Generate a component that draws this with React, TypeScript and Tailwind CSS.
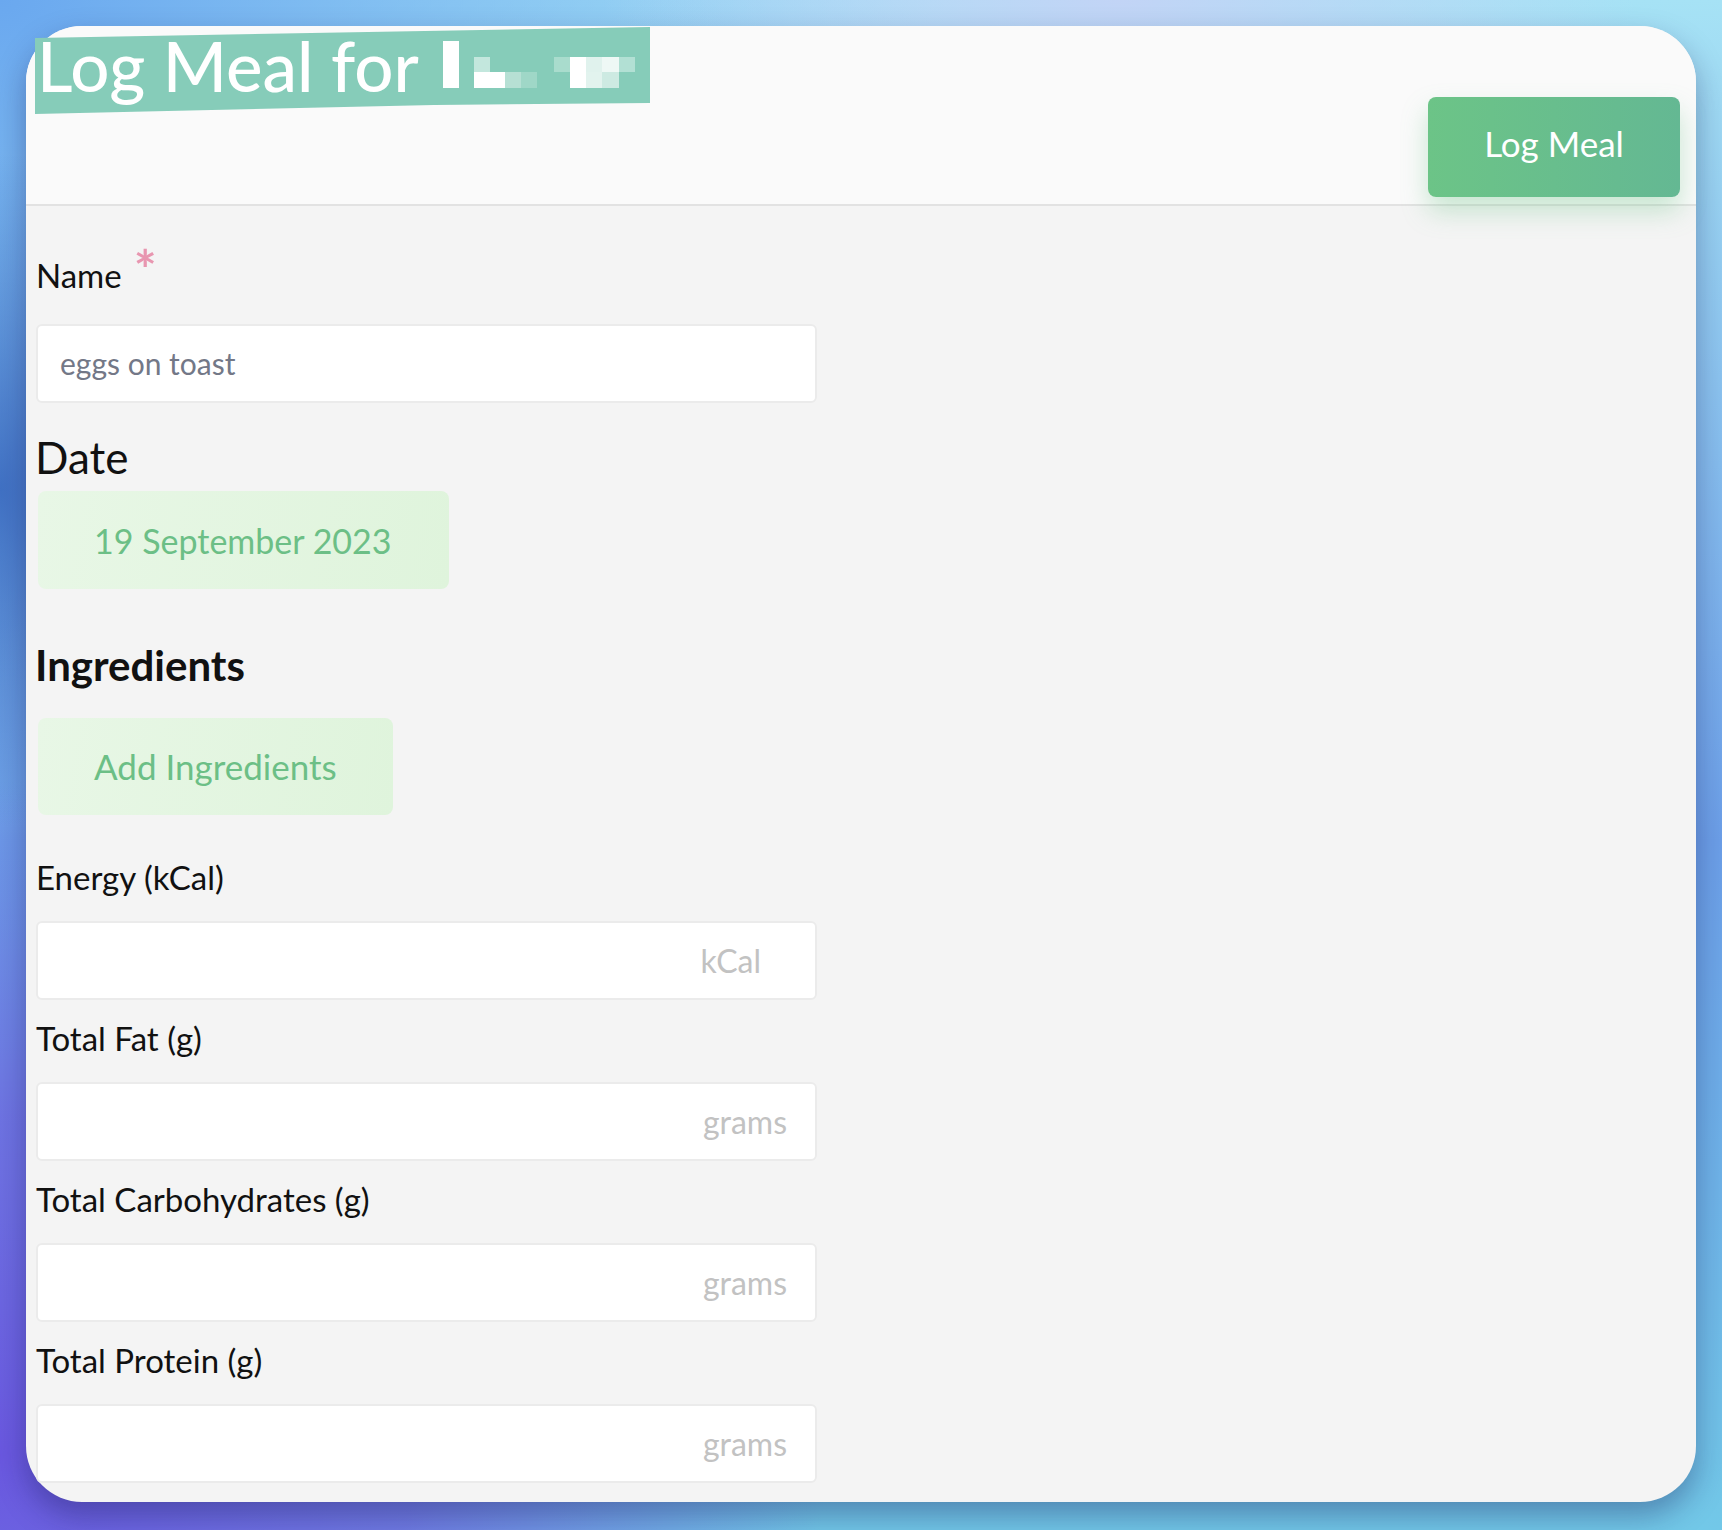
import React from "react";

function Redaction() {
  const rects: [number, number, number, number, string][] = [
    [0, 0, 16, 47, "#ffffff"],
    [31, 16, 16, 15, "#c3e7dd"],
    [31, 31, 31, 16, "#ffffff"],
    [62, 31, 16, 16, "#b6e0d4"],
    [78, 31, 16, 16, "#9fd7c7"],
    [111, 16, 16, 15, "#a9dccd"],
    [127, 16, 16, 31, "#ffffff"],
    [143, 16, 16, 15, "#e0f2ed"],
    [159, 16, 17, 15, "#eef8f5"],
    [176, 16, 16, 15, "#b2e0d4"],
    [143, 31, 16, 16, "#e2f3ee"],
    [159, 31, 17, 16, "#cdeae2"],
  ];
  return (
    <svg width="192" height="47" viewBox="0 0 192 47" className="absolute left-[408px] top-[15px]">
      {rects.map(([x, y, w, h, c], i) => (
        <rect key={i} x={x} y={y} width={w} height={h} fill={c} />
      ))}
    </svg>
  );
}

function Field({ label, unit, pr, first }: { label: string; unit: string; pr: string; first?: boolean }) {
  return (
    <>
      <div className={`${first ? "mt-[42px]" : "mt-[18px]"} h-[40px] leading-[40px] text-[33px] text-[#111]`}>{label}</div>
      <div
        className={`mt-[24px] h-[79px] w-[781px] rounded-[6px] border-2 border-[#ebebeb] bg-white flex items-center justify-end ${pr} text-[32px] text-[#c2c2c2]`}
      >
        {unit}
      </div>
    </>
  );
}

export default function App() {
  return (
    <div className="w-[1722px] h-[1530px] overflow-hidden font-['Lato',sans-serif] bg-[radial-gradient(ellipse_12%_22%_at_0%_32%,rgba(58,106,192,0.9),rgba(58,106,192,0)),radial-gradient(ellipse_30%_12%_at_65%_0%,rgba(194,212,246,1),rgba(194,212,246,0)),radial-gradient(ellipse_55%_45%_at_0%_0%,#6aa8ef,rgba(106,168,239,0)),radial-gradient(ellipse_60%_55%_at_0%_95%,#6a58e0_0%,rgba(110,90,224,0.7)_40%,rgba(110,90,224,0)_80%),linear-gradient(180deg,#a6e2f5_0%,#6c9fe8_55%,#72c8e8_100%)] p-[26px]">
      <div className="relative w-[1670px] h-[1476px] rounded-[56px] bg-[#f4f4f4] shadow-[0_14px_30px_rgba(20,20,80,0.35)]">
        {/* header */}
        <div className="relative h-[180px] rounded-t-[56px] bg-[#fafafa] border-b-2 border-[#e2e2e2] flex justify-between">
          <div className="relative ml-[9px] w-[615px] h-[88px]">
            <div className="absolute inset-0 bg-[#86ccb9] [clip-path:polygon(0_12px,100%_1px,100%_77px,399px_79px,0_88px)]" />
            <div className="absolute left-[2px] top-[0px] text-[69px] leading-[80px] font-medium text-white whitespace-nowrap">
              Log Meal for
            </div>
            <Redaction />
          </div>
          <div className="pt-[71px] pr-[16px]">
            <div className="w-[252px] h-[100px] rounded-[8px] bg-[linear-gradient(90deg,#6cc487,#64b893)] shadow-[0_14px_26px_rgba(108,196,135,0.35)] flex items-center justify-center pb-[8px] text-white text-[35px]">
              Log Meal
            </div>
          </div>
        </div>

        {/* body */}
        <div className="pl-[10px] flex flex-col items-start">
          <div className="mt-[49px] h-[40px] leading-[40px] text-[33px] text-[#111] flex">
            <span>Name</span>
            <span className="ml-[12px] text-[#e896b0] text-[54px] font-bold leading-[40px] -mt-[6px]">*</span>
          </div>
          <div className="mt-[29px] h-[79px] w-[781px] rounded-[6px] border-2 border-[#ebebeb] bg-white flex items-center pl-[22px] text-[30px] text-[#737887]">
            eggs on toast
          </div>

          <div className="mt-[30px] h-[48px] leading-[48px] text-[44px] text-[#111] -ml-[1px]">Date</div>
          <div className="mt-[10px] ml-[2px] w-[411px] h-[98px] rounded-[8px] bg-[linear-gradient(100deg,#e8f7e6,#dff4dc)] flex items-center pl-[56px] text-[34px] text-[#6cbf86]">
            19 September 2023
          </div>

          <div className="mt-[52px] h-[48px] leading-[48px] text-[42px] font-bold text-[#111] -ml-[1px]">Ingredients</div>
          <div className="mt-[29px] ml-[2px] w-[355px] h-[97px] rounded-[8px] bg-[linear-gradient(100deg,#e8f7e6,#dff4dc)] flex items-center pl-[56px] text-[35px] text-[#6cbf86]">
            Add Ingredients
          </div>

          <Field first label="Energy (kCal)" unit="kCal" pr="pr-[54px]" />
          <Field label="Total Fat (g)" unit="grams" pr="pr-[28px]" />
          <Field label="Total Carbohydrates (g)" unit="grams" pr="pr-[28px]" />
          <Field label="Total Protein (g)" unit="grams" pr="pr-[28px]" />
        </div>
      </div>
    </div>
  );
}
